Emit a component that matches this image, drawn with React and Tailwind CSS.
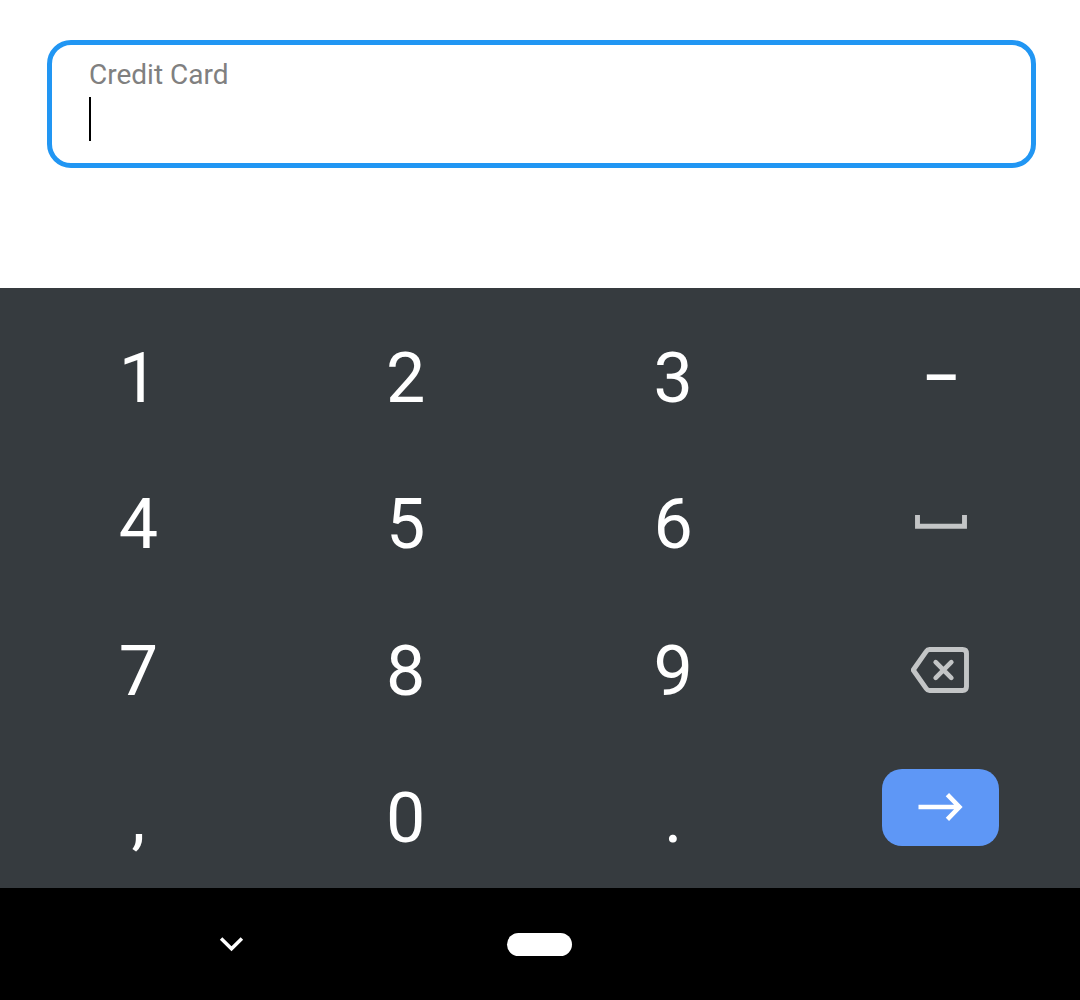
const Key = ({ children }) => (
  <div className="flex w-[267.4px] items-center justify-center">{children}</div>
);

const rows = [
  ["1", "2", "3", "–"],
  ["4", "5", "6", "space"],
  ["7", "8", "9", "back"],
  [",", "0", ".", "go"],
];

function Symbol({ k }) {
  if (k === "–")
    return (
      <svg className="mb-[1px] h-[8px] w-[30px]" viewBox="0 0 30 8"><path d="M.8 4.200h28.900" stroke="#fff" strokeWidth="5.6" /></svg>
    );
  if (k === "space")
    return (
      <svg className="mb-[5px] h-[14px] w-[52px]" viewBox="0 0 52 14" fill="none"><path d="M2.500 0v11.200h47V0" stroke="#c3c5c6" strokeWidth="4.9" /></svg>
    );
  if (k === "back")
    return (
      <svg className="mb-[2px] h-[46px] w-[60px]" viewBox="0 0 60 46" fill="none" stroke="#c3c5c6" strokeWidth="4.9">
        <path d="M18.500 2.500h33q4 0 4 4v33q0 4-4 4h-33q-2 0-3.200-1.800L2.200 23L15.300 4.300q1.200-1.800 3.200-1.800Z" strokeLinejoin="round" />
        <path d="M24.700 15.200l15.600 15.600M40.300 15.200l-15.600 15.600" strokeLinecap="round" strokeWidth="4.700" />
      </svg>
    );
  if (k === "go")
    return (
      <div className="mb-[20px] flex h-[77px] w-[117px] items-center justify-center rounded-[20px] bg-[#5e97f6]">
        <svg className="h-[30px] w-[46px]" viewBox="0 0 46 30" fill="none" stroke="#fff" strokeWidth="4.6"><path d="M.5 14h41M29.400 1.700l12 12.300-12 12.300" /></svg>
      </div>
    );
  return <span>{k}</span>;
}

export default function App() {
  return (
    <div className="flex h-[1000px] w-[1080px] flex-col bg-white font-['Roboto',sans-serif]">
      <div className="h-[288px] pl-[47px] pt-[40px]">
        <div className="h-[128px] w-[989px] rounded-[24px] border-[5px] border-[#2196f3] pl-[37px] pt-[12px]">
          <div className="h-[40px] text-[28px] leading-[36px] text-[#808080]">Credit Card</div>
          <div className="h-[44px] w-[2px] bg-black" />
        </div>
      </div>
      <div className="h-[600px] bg-[#363b3f] pl-[4.7px] pt-[16.5px] text-[70px] leading-none text-white">
        {rows.map((r) => (
          <div key={r[0]} className="flex h-[146.6px]">
            {r.map((k) => <Key key={k}><Symbol k={k} /></Key>)}
          </div>
        ))}
      </div>
      <div className="flex h-[112px] items-center bg-black">
        <svg className="ml-[219px] h-[16px] w-[25px]" viewBox="0 0 25 16" fill="none" stroke="#fff" strokeWidth="3.5"><path d="M2.100 2.500l10.400 10.300L22.900 2.500" /></svg>
        <div className="ml-[263px] h-[23px] w-[65px] rounded-full bg-white" />
      </div>
    </div>
  );
}
